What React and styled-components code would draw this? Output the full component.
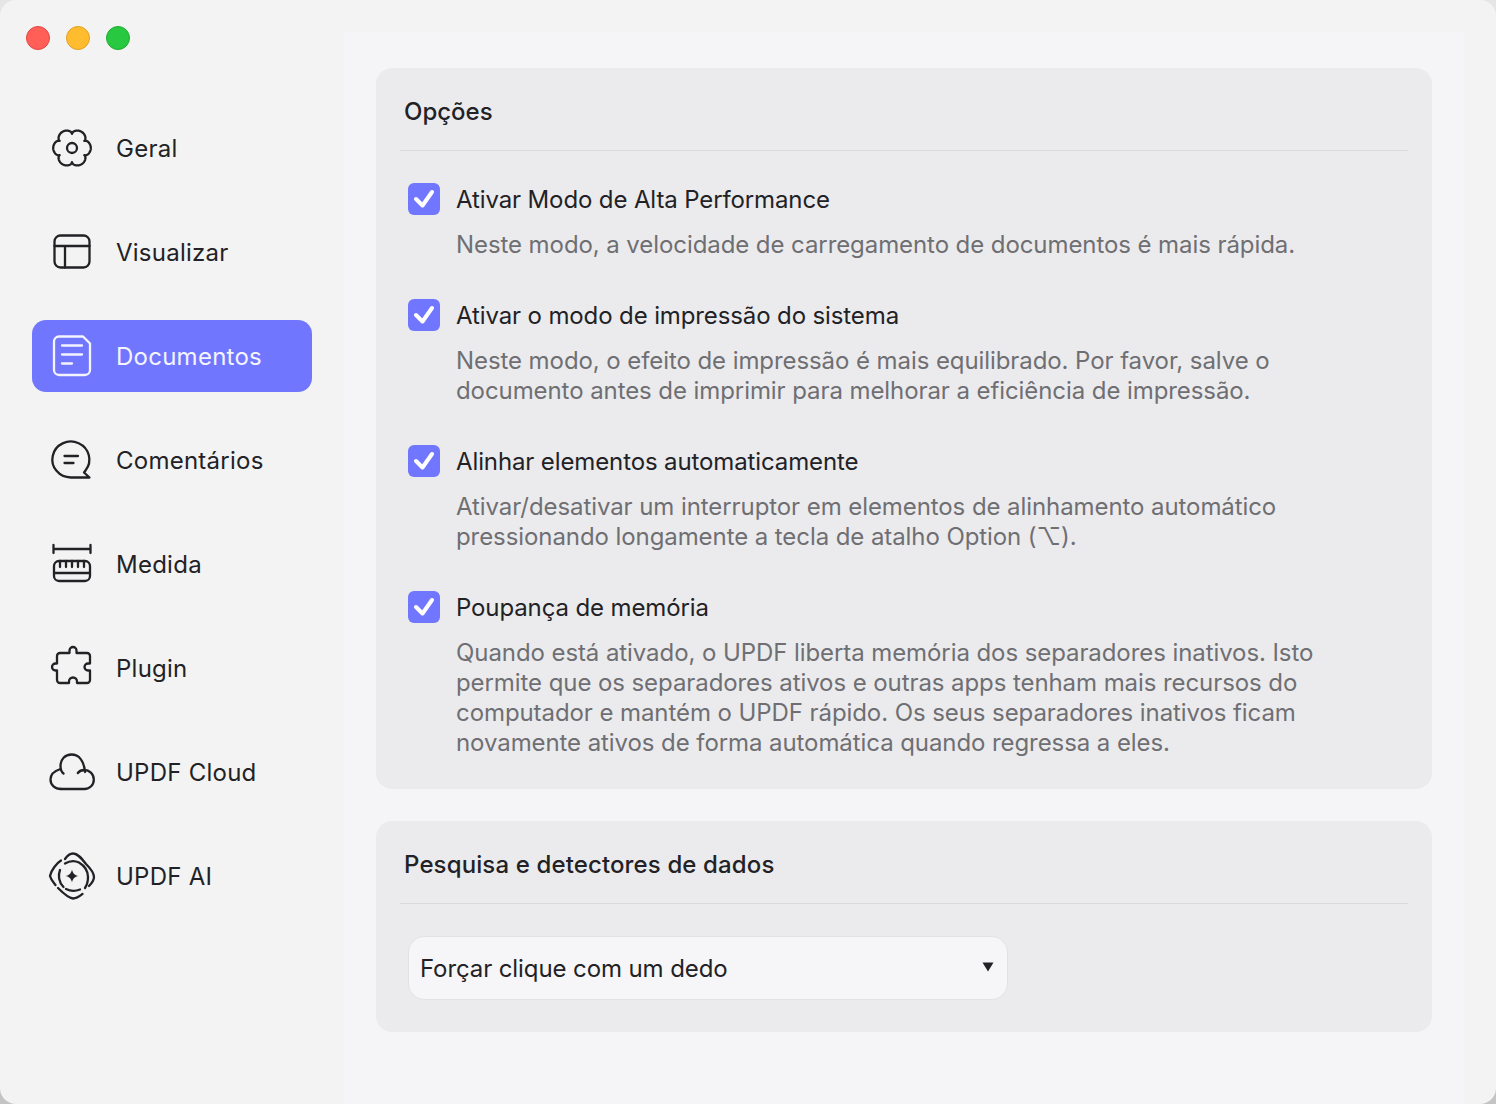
import React from "react";
import styled, { createGlobalStyle } from "styled-components";

const Global = createGlobalStyle`
  html, body { margin: 0; padding: 0; }
  body { background: linear-gradient(180deg, #e6e6e6 0%, #c4c4c4 100%); font-family: Inter, "Liberation Sans", sans-serif; }
  * { box-sizing: border-box; }
`;

const Window = styled.div`
  width: 1496px; height: 1104px; display: flex;
  background: #f3f3f3; border-radius: 16px; overflow: hidden;
`;
const Sidebar = styled.aside`
  width: 344px; flex: none; display: flex; flex-direction: column; padding: 26px 32px 0;
`;
const Lights = styled.div`display: flex; gap: 16px; margin: 0 0 62px -6px;`;
const Light = styled.span`
  width: 24px; height: 24px; border-radius: 50%;
  background: ${p => p.$c}; border: 1px solid ${p => p.$b};
`;
const Nav = styled.nav`display: flex; flex-direction: column; gap: 32px; width: 280px;`;
const NavItem = styled.div`
  height: 72px; display: flex; align-items: center; gap: 20px; padding-left: 16px;
  border-radius: 14px; font-size: 24px; letter-spacing: 0.25px; font-weight: 400;
  color: ${p => p.$active ? "#f4f4ff" : "#222226"};
  background: ${p => p.$active ? "#7176ff" : "transparent"};
`;
const Icon = styled.svg`
  width: 48px; height: 48px; flex: none; fill: none; stroke: currentColor;
  stroke-width: 2.3; stroke-linecap: round; stroke-linejoin: round;
`;
const Main = styled.main`
  flex: 1; margin: 32px 32px 0 0; background: #f5f5f7; padding: 36px 32px 0;
  display: flex; flex-direction: column; gap: 32px;
`;
const Card = styled.section`
  background: #ebebed; border-radius: 16px; padding: 0 24px ${p => p.$pb}px;
`;
const CardTitle = styled.h2`
  margin: 0; height: 83px; padding: 29px 4px 0; border-bottom: 1px solid #d9d9dc;
  font-size: 24px; line-height: 30px; font-weight: 500; letter-spacing: ${p => p.$ls}px; color: #222226;
`;
const Rows = styled.div`display: flex; flex-direction: column; gap: 39px; padding: 32px 8px 0;`;
const Row = styled.div`display: grid; grid-template-columns: 32px 1fr; column-gap: 16px; row-gap: 15px;`;
const Check = styled.div`
  width: 32px; height: 32px; border-radius: 6px; background: #7176ff; display: flex;
`;
const CheckIcon = styled.svg`
  width: 32px; height: 32px; fill: none; stroke: #fff; stroke-width: 4;
  stroke-linecap: round; stroke-linejoin: round;
`;
const RowTitle = styled.div`
  font-size: 24px; line-height: 32px; padding-top: 1px; height: 32px; letter-spacing: -0.12px; color: #222226;
`;
const RowDesc = styled.div`
  grid-column: 2; font-size: 24px; line-height: 30px; letter-spacing: -0.08px; color: #6f6f73;
`;
const Select = styled.div`
  margin: 32px 8px 0; width: 600px; height: 64px; border-radius: 16px;
  background: #f6f6f8; border: 1px solid #e2e2e5; display: flex; align-items: center;
  justify-content: space-between; padding: 0 13px 0 11px;
  font-size: 24px; letter-spacing: -0.1px; color: #222226;
`;
const Caret = styled.svg`width: 12px; height: 10px; fill: #222226; margin-top: -2px;`;

const gearPath = (() => {
  const pts = [];
  for (let i = 0; i < 240; i++) {
    const t = (i / 240) * Math.PI * 2;
    const r = 14.2 + 4.6 * Math.pow(Math.abs(Math.cos(3 * t)), 0.55);
    pts.push(`${(24 + r * Math.cos(t)).toFixed(2)} ${(24 + r * Math.sin(t)).toFixed(2)}`);
  }
  return `M${pts.join("L")}z`;
})();

const icons = {
  gear: <>
    <path d={gearPath} />
    <circle cx="24" cy="24" r="5" />
  </>,
  layout: <>
    <rect x="6.500" y="7.500" width="35" height="32" rx="6" />
    <path d="M6.500 18h35M17 18v21.500" />
  </>,
  doc: <>
    <path d="M11 4.500h24l7 7V38a5 5 0 0 1-5 5H11a5 5 0 0 1-5-5V9.500a5 5 0 0 1 5-5z" />
    <path d="M14 13.500h20M14 22.500h20M14 31.500h10" />
  </>,
  comment: <>
    <path d="M23 41.500A18.500 18 0 1 1 37.500 34.500L36 36.500L41.500 41.500H23z" />
    <path d="M16.500 20h13.500M16.500 27h9" />
  </>,
  ruler: <>
    <path d="M5.500 9h37M5.500 5v8M42.500 5v8" />
    <path d="M11 21h26a5 5 0 0 1 5 5v10a5 5 0 0 1-5 5H11a5 5 0 0 1-5-5V26a5 5 0 0 1 5-5z" />
    <path d="M6 33h36M12 21v6M18 21v6M24 21v6M30 21v6M36 21v6" />
  </>,
  puzzle: <path d="M9 19.500V12a3 3 0 0 1 3-3H21.500V6.500a3.500 3.500 0 0 1 7 0V9H39a3 3 0 0 1 3 3V19.500H40a3.500 3.500 0 0 0 0 7H42V36a3 3 0 0 1-3 3H29V37.500a4 4 0 0 0-8 0V39H12a3 3 0 0 1-3-3V26.500H7.500a3.500 3.500 0 0 1 0-7z" />,
  cloud: <>
    <path d="M13 41H36.500a9.300 9.300 0 0 0 9.300-9.500c0-5.500-4.500-9.500-9.500-9.500c-2.500 0-5 1-6.500 3" />
    <path d="M37 24C36 13 31 6.500 23.500 6.500C17 6.500 12.500 11.500 12.500 18C12.500 21 13.500 24 15.500 25.500" />
    <path d="M13 41C7 41 2.500 37 2.500 31.500C2.500 27 6 23 12.500 21" />
  </>,
  ai: <>
    <path d="M24 17.500c.9 4 2.500 5.600 6.500 6.500c-4 .9-5.600 2.500-6.500 6.500c-.9-4-2.500-5.600-6.500-6.500c4-.9 5.600-2.500 6.500-6.500z" fill="currentColor" stroke="none" />
    <path d="M17 7C19 4 22 1.500 25 1.500C30 1.500 34 7 38 12C42 16 46 21 46 25C46 28 44 31 41 34" />
    <path d="M13 8.500C9 11 3 18 2 24C3 28 6 31 7.500 33" />
    <path d="M10 36C14 40 20 46 25 46.500C29 46.500 32 44 34.500 42" />
    <path d="M17 11.500C22 8.500 27 8.500 31 10.500C36 13.500 40 19 40 25C40 29 39 33 37 36" />
    <path d="M12 18C10 23 10.500 30 15.500 35" />
    <path d="M18 37C22 39 27 39.500 32 37.500" />
  </>,
};

const items = [
  ["gear", "Geral"], ["layout", "Visualizar"], ["doc", "Documentos", true], ["comment", "Comentários"],
  ["ruler", "Medida"], ["puzzle", "Plugin"], ["cloud", "UPDF Cloud"], ["ai", "UPDF AI"],
];

const options = [
  ["Ativar Modo de Alta Performance", ["Neste modo, a velocidade de carregamento de documentos é mais rápida."]],
  ["Ativar o modo de impressão do sistema", ["Neste modo, o efeito de impressão é mais equilibrado. Por favor, salve o", "documento antes de imprimir para melhorar a eficiência de impressão."]],
  ["Alinhar elementos automaticamente", ["Ativar/desativar um interruptor em elementos de alinhamento automático", "pressionando longamente a tecla de atalho Option (⌥)."]],
  ["Poupança de memória", ["Quando está ativado, o UPDF liberta memória dos separadores inativos. Isto", "permite que os separadores ativos e outras apps tenham mais recursos do", "computador e mantém o UPDF rápido. Os seus separadores inativos ficam", "novamente ativos de forma automática quando regressa a eles."]],
];

export default function App() {
  return (
    <>
      <Global />
      <Window>
        <Sidebar>
          <Lights>
            <Light $c="#ff5f57" $b="#e2463f" />
            <Light $c="#febc2e" $b="#dfa123" />
            <Light $c="#28c840" $b="#1fad2f" />
          </Lights>
          <Nav>
            {items.map(([ic, label, active]) => (
              <NavItem key={label} $active={active}>
                <Icon viewBox="0 0 48 48">{icons[ic]}</Icon>
                {label}
              </NavItem>
            ))}
          </Nav>
        </Sidebar>
        <Main>
          <Card $pb={31}>
            <CardTitle $ls={0}>Opções</CardTitle>
            <Rows>
              {options.map(([title, lines]) => (
                <Row key={title}>
                  <Check>
                    <CheckIcon viewBox="0 0 32 32"><path d="M8 16l6.500 6.500L24 9" /></CheckIcon>
                  </Check>
                  <RowTitle>{title}</RowTitle>
                  <RowDesc>{lines.map(l => <div key={l}>{l}</div>)}</RowDesc>
                </Row>
              ))}
            </Rows>
          </Card>
          <Card $pb={32}>
            <CardTitle $ls={0.13}>Pesquisa e detectores de dados</CardTitle>
            <Select>
              Forçar clique com um dedo
              <Caret viewBox="0 0 12 10"><path d="M0.500 0.500h11L6 9.500z" /></Caret>
            </Select>
          </Card>
        </Main>
      </Window>
    </>
  );
}
